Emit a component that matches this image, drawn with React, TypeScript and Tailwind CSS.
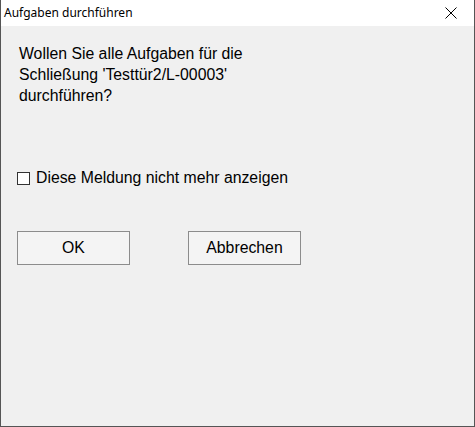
import React, { useState } from 'react';

export default function App() {
  const [dontShow, setDontShow] = useState(false);

  return (
    <div className="w-[475px] h-[427px] flex flex-col bg-[#f0f0f0] border-x border-b border-[#555555] font-['Liberation_Sans',Arial,sans-serif] text-black overflow-hidden">
      {/* title bar */}
      <div className="h-[26px] shrink-0 bg-white flex items-center justify-between pl-[3px]">
        <span className="text-[12px] font-['Noto_Sans','Open_Sans',sans-serif] leading-none pb-[1px]">Aufgaben durchführen</span>
        <button className="w-[46px] h-[26px] flex items-center justify-center">
          <svg width="12" height="12" viewBox="0 0 12 12" className="stroke-black">
            <path d="M0.5 0.5 L11.5 11.5 M11.5 0.5 L0.5 11.5" strokeWidth="1" />
          </svg>
        </button>
      </div>

      {/* body */}
      <div className="flex flex-col pl-[16px] pt-[17px]">
        <p className="text-[15.8px] leading-[21px] w-[260px] ml-[2px]">
          Wollen Sie alle Aufgaben für die Schließung 'Testtür2/L-00003' durchführen?
        </p>

        <label className="flex items-center gap-[6px] mt-[62px] text-[15.8px] leading-[20px] cursor-default">
          <span
            onClick={() => setDontShow(!dontShow)}
            className="w-[13px] h-[13px] border border-[#333333] bg-white flex items-center justify-center"
          >
            {dontShow && (
              <svg width="9" height="9" viewBox="0 0 9 9">
                <path d="M1 4.5 L3.5 7 L8 1.5" fill="none" stroke="black" strokeWidth="1.5" />
              </svg>
            )}
          </span>
          <span>Diese Meldung nicht mehr anzeigen</span>
        </label>

        <div className="flex gap-[58px] mt-[43px]">
          <button className="w-[113px] h-[34px] border border-[#8c8c8c] bg-[#f4f4f4] text-[15.8px]">OK</button>
          <button className="w-[113px] h-[34px] border border-[#8c8c8c] bg-[#f4f4f4] text-[15.8px]">Abbrechen</button>
        </div>
      </div>
    </div>
  );
}
